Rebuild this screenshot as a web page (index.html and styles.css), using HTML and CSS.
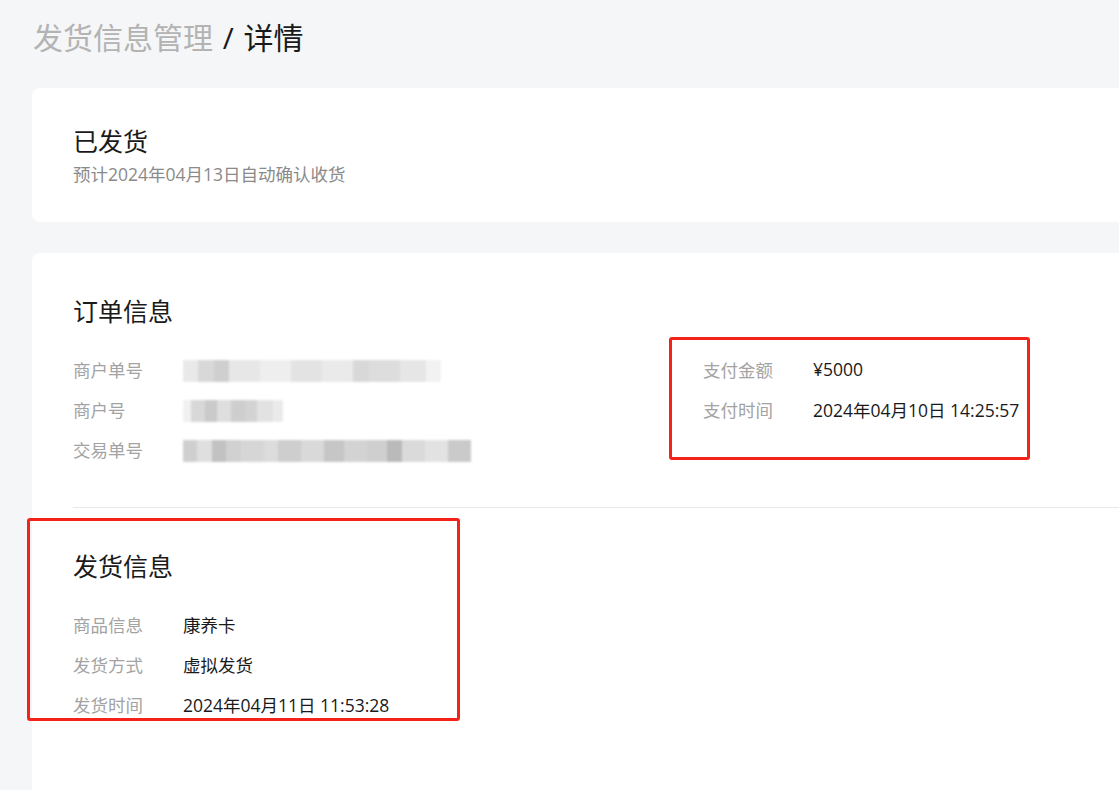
FILE: index.html
```html
<!DOCTYPE html>
<html lang="zh-CN">
<head>
  <meta charset="UTF-8" />
  <meta name="viewport" content="width=device-width, initial-scale=1.0"/>
  <title>发货信息管理 / 详情</title>
  <link rel="stylesheet" href="styles.css">
</head>
<body>
  <div class="page">
    <h1 class="crumb"><span class="crumb-parent">发货信息管理</span> / 详情</h1>

    <!-- Status -->
    <div class="card status-card">
      <div class="status-title">已发货</div>
      <div class="status-sub">预计2024年04月13日自动确认收货</div>
    </div>

    <!-- Details -->
    <div class="card detail-card">
      <div class="section">
        <h2 class="section-title">订单信息</h2>
        <div class="cols">
          <div class="col">
            <div class="row"><span class="label">商户单号</span><span class="value"><span class="masked mask-a"></span></span></div>
            <div class="row"><span class="label">商户号</span><span class="value"><span class="masked mask-b"></span></span></div>
            <div class="row"><span class="label">交易单号</span><span class="value"><span class="masked mask-c"></span></span></div>
          </div>
          <div class="col">
            <div class="row"><span class="label">支付金额</span><span class="value">¥5000</span></div>
            <div class="row"><span class="label">支付时间</span><span class="value">2024年04月10日 14:25:57</span></div>
          </div>
        </div>
        <div class="mark mark-pay"></div>
      </div>

      <div class="divider"></div>

      <div class="section">
        <h2 class="section-title">发货信息</h2>
        <div class="col">
          <div class="row"><span class="label">商品信息</span><span class="value">康养卡</span></div>
          <div class="row"><span class="label">发货方式</span><span class="value">虚拟发货</span></div>
          <div class="row"><span class="label">发货时间</span><span class="value">2024年04月11日 11:53:28</span></div>
        </div>
        <div class="mark mark-ship"></div>
      </div>
    </div>
  </div>
</body>
</html>
```

FILE: styles.css
```css
body {
  margin: 0;
  background-color: #f5f6f8;
  font-family: "Open Sans", "Noto Sans CJK SC", sans-serif;
  color: #1a1a1a;
  overflow: hidden;
}
.page {
  width: 1200px;
  padding: 16px 0 0 32px;
}
.crumb {
  margin: 0 0 0 1px;
  font-size: 30px;
  font-weight: 400;
  line-height: 44px;
  color: #1a1a1a;
  word-spacing: 2px;
}
.crumb-parent {
  color: #b3b3b3;
}
.card {
  background-color: #fff;
  border-radius: 8px;
}
.status-card {
  margin-top: 28px;
  height: 134px;
  padding: 0 41px;
  box-sizing: border-box;
  padding-top: 36px;
}
.status-title {
  font-size: 25px;
  line-height: 34px;
}
.status-sub {
  font-size: 17.5px;
  line-height: 26px;
  color: #8a8a8a;
  margin-top: 3px;
}
.detail-card {
  margin-top: 31px;
  padding: 40px 41px 80px;
}
.section {
  position: relative;
}
.section-title {
  margin: 0 0 20px;
  font-size: 25px;
  font-weight: 400;
  line-height: 36px;
}
.cols {
  display: grid;
  grid-template-columns: 630px 1fr;
}
.row {
  display: flex;
  align-items: center;
  height: 40px;
  font-size: 17.5px;
}
.label {
  width: 110px;
  color: #a3a3a3;
}
.value {
  color: #1a1a1a;
}
.masked {
  display: inline-block;
  height: 22px;
  vertical-align: middle;
  filter: blur(1px);
  opacity: 0.8;
}
.mask-a {
  width: 258px;
  background: linear-gradient(90deg, #e4e4e4 0 6%, #cfcfcf 6% 12%, #c4c4c4 12% 18%, #e2e2e2 18% 30%, #ebebeb 30% 42%, #dddddd 42% 54%, #e6e6e6 54% 66%, #cfcfcf 66% 72%, #d5d5d5 72% 84%, #e1e1e1 84% 94%, #f0f0f0 94% 100%);
}
.mask-b {
  width: 100px;
  background: linear-gradient(90deg, #eeeeee 0 8%, #cfcfcf 8% 22%, #bdbdbd 22% 34%, #d6d6d6 34% 48%, #c3c3c3 48% 62%, #c9c9c9 62% 74%, #dcdcdc 74% 90%, #e6e6e6 90% 100%);
}
.mask-c {
  width: 288px;
  background: linear-gradient(90deg, #c4c4c4 0 5%, #d8d8d8 5% 10%, #b3b3b3 10% 15%, #c6c6c6 15% 20%, #cdcdcd 20% 28%, #d4d4d4 28% 33%, #c2c2c2 33% 41%, #d0d0d0 41% 49%, #b8b8b8 49% 56%, #c9c9c9 56% 64%, #c4c4c4 64% 71%, #a9a9a9 71% 76%, #d2d2d2 76% 84%, #dcdcdc 84% 92%, #bdbdbd 92% 100%);
}
.divider {
  height: 1px;
  background-color: #e8e8e8;
  margin: 38px 0 40px;
}
.mark {
  position: absolute;
  border: 3px solid #f5221b;
  border-radius: 3px;
}
.mark-pay {
  left: 596px;
  top: 44px;
  width: 355px;
  height: 117px;
}
.mark-ship {
  left: -46px;
  top: -30px;
  width: 427px;
  height: 197px;
}
```
